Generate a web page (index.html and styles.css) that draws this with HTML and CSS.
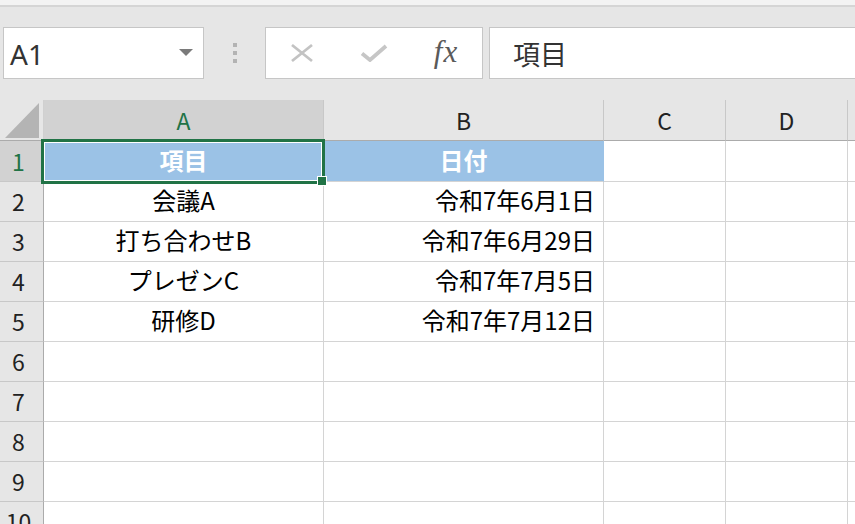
FILE: index.html
```html
<!DOCTYPE html>
<html lang="ja">
<head>
<meta charset="utf-8">
<title>Excel</title>
<link rel="stylesheet" href="styles.css">
</head>
<body>
<div class="app">
  <div class="topstrip"></div>
  <div class="formula-row">
    <div class="namebox">
      <span class="name">A1</span>
      <span class="dropdown"></span>
    </div>
    <div class="grip"><span></span><span></span><span></span></div>
    <div class="fx-tools">
      <div class="tool">
        <svg width="24" height="20" viewBox="0 0 24 20"><path d="M2 2 L22 18 M22 2 L2 18" stroke="#c3c3c3" stroke-width="2.8" fill="none"/></svg>
      </div>
      <div class="tool">
        <svg width="28" height="18" viewBox="0 0 28 18"><path d="M2 9.5 L10 16 L26 2" stroke="#c6c6c6" stroke-width="3.8" fill="none" stroke-linejoin="miter"/></svg>
      </div>
      <div class="tool fx"><span>fx</span></div>
    </div>
    <div class="formula">項目</div>
  </div>
  <div class="sheet">
    <div class="corner"><svg width="35" height="35" viewBox="0 0 35 35"><path d="M34 0 L34 35 L0 35 Z" fill="#b4b4b4"/></svg></div>
    <div class="ch sel">A</div>
    <div class="ch">B</div>
    <div class="ch">C</div>
    <div class="ch">D</div>
    <div class="ch last"></div>

    <div class="rh sel r1">1</div>
    <div class="c r1 blue head">項目</div>
    <div class="c r1 blue head">日付</div>
    <div class="c r1"></div><div class="c r1"></div><div class="c r1 last"></div>

    <div class="rh">2</div>
    <div class="c center">会議A</div>
    <div class="c right">令和7年6月1日</div>
    <div class="c"></div><div class="c"></div><div class="c last"></div>

    <div class="rh">3</div>
    <div class="c center">打ち合わせB</div>
    <div class="c right">令和7年6月29日</div>
    <div class="c"></div><div class="c"></div><div class="c last"></div>

    <div class="rh">4</div>
    <div class="c center">プレゼンC</div>
    <div class="c right">令和7年7月5日</div>
    <div class="c"></div><div class="c"></div><div class="c last"></div>

    <div class="rh">5</div>
    <div class="c center">研修D</div>
    <div class="c right">令和7年7月12日</div>
    <div class="c"></div><div class="c"></div><div class="c last"></div>

    <div class="rh">6</div>
    <div class="c"></div><div class="c"></div><div class="c"></div><div class="c"></div><div class="c last"></div>
    <div class="rh">7</div>
    <div class="c"></div><div class="c"></div><div class="c"></div><div class="c"></div><div class="c last"></div>
    <div class="rh">8</div>
    <div class="c"></div><div class="c"></div><div class="c"></div><div class="c"></div><div class="c last"></div>
    <div class="rh">9</div>
    <div class="c"></div><div class="c"></div><div class="c"></div><div class="c"></div><div class="c last"></div>
    <div class="rh">10</div>
    <div class="c"></div><div class="c"></div><div class="c"></div><div class="c"></div><div class="c last"></div>

    <div class="selection"></div>
    <div class="handle"></div>
  </div>
</div>
</body>
</html>
```

FILE: styles.css
```css
* { box-sizing: border-box; }
html, body {
  margin: 0;
  padding: 0;
}
body {
  width: 855px;
  height: 524px;
  overflow: hidden;
  background: #e6e6e6;
  font-family: "Noto Sans CJK JP", "Noto Sans", sans-serif;
  color: #000;
}
.app { width: 855px; height: 524px; overflow: hidden; }

.topstrip {
  height: 7px;
  background: #f3f3f3;
  border-bottom: 2px solid #d5d5d5;
}

.formula-row {
  display: flex;
  height: 52px;
  margin-top: 20px;
  padding-left: 3px;
}
.namebox {
  width: 201px;
  background: #fff;
  border: 1px solid #c6c6c6;
  display: flex;
  align-items: center;
  justify-content: space-between;
  padding: 0 10px 0 6px;
}
.name {
  font-family: "Noto Sans", "Open Sans", sans-serif;
  font-size: 28px;
  color: #333;
  line-height: 1;
  margin-top: 2px;
}
.dropdown {
  width: 0; height: 0;
  border-left: 7px solid transparent;
  border-right: 7px solid transparent;
  border-top: 7px solid #7a7a7a;
  margin-top: -2px;
}
.grip {
  width: 61px;
  display: flex;
  flex-direction: column;
  align-items: center;
  justify-content: center;
  gap: 4px;
}
.grip span {
  width: 4px; height: 4px;
  background: #b3b3b3;
}
.fx-tools {
  width: 218px;
  background: #fff;
  border: 1px solid #c6c6c6;
  display: flex;
  align-items: center;
}
.tool {
  width: 72px;
  display: flex;
  align-items: center;
  justify-content: center;
}
.tool.fx span {
  font-family: "Liberation Serif", "DejaVu Serif", serif;
  font-style: italic;
  font-size: 31px;
  color: #5a5a5a;
  line-height: 1;
  margin-top: -4px;
  letter-spacing: 1px;
}
.formula {
  flex: 1;
  margin-left: 6px;
  margin-right: -10px;
  background: #fff;
  border: 1px solid #c6c6c6;
  display: flex;
  align-items: center;
  padding-left: 23px;
  font-size: 27px;
  line-height: 1;
  color: #333;
}

.sheet {
  position: relative;
  margin-top: 21px;
  display: grid;
  grid-template-columns: 44px 280px 280px 122px 122px 60px;
  grid-template-rows: 41px 41px repeat(9, 40px);
  background: #fff;
}
.corner {
  background: #e6e6e6;
  border-right: 1px solid #d0d0d0;
  border-bottom: 1px solid #ababab;
  display: flex;
  align-items: flex-end;
  justify-content: flex-end;
  padding: 0 3px 2px 0;
}
.corner svg { display: block; }
.ch {
  background: #e6e6e6;
  border-right: 1px solid #c8c8c8;
  border-bottom: 1px solid #ababab;
  display: flex;
  align-items: center;
  justify-content: center;
  font-size: 23px;
  line-height: 1;
  color: #222;
}
.ch.sel {
  background: #d2d2d2;
  color: #217346;
}
.rh {
  background: #e6e6e6;
  border-right: 1px solid #ababab;
  border-bottom: 1px solid #c8c8c8;
  display: flex;
  align-items: center;
  justify-content: center;
  padding-right: 6px;
  font-size: 23px;
  line-height: 1;
  color: #222;
}
.rh.sel {
  background: #d2d2d2;
  color: #217346;
}
.c {
  border-right: 1px solid #d4d4d4;
  border-bottom: 1px solid #d4d4d4;
  display: flex;
  align-items: center;
  font-size: 24px;
  line-height: 1;
  padding-bottom: 3px;
  white-space: nowrap;
}
.c.last, .ch.last { border-right: none; }
.c.center { justify-content: center; }
.c.right { justify-content: flex-end; padding-right: 8px; }
.c.blue {
  background: #9bc2e6;
  border-right-color: #9bc2e6;
}
.c.head {
  justify-content: center;
  color: #fff;
  font-weight: bold;
}

.selection {
  position: absolute;
  left: 41px;
  top: 39px;
  width: 284px;
  height: 45px;
  border: 3px solid #217346;
  box-shadow: inset 0 0 0 1px #fff;
}
.handle {
  position: absolute;
  left: 317px;
  top: 76px;
  width: 10px;
  height: 10px;
  background: #217346;
  border: 1px solid #fff;
}
```
